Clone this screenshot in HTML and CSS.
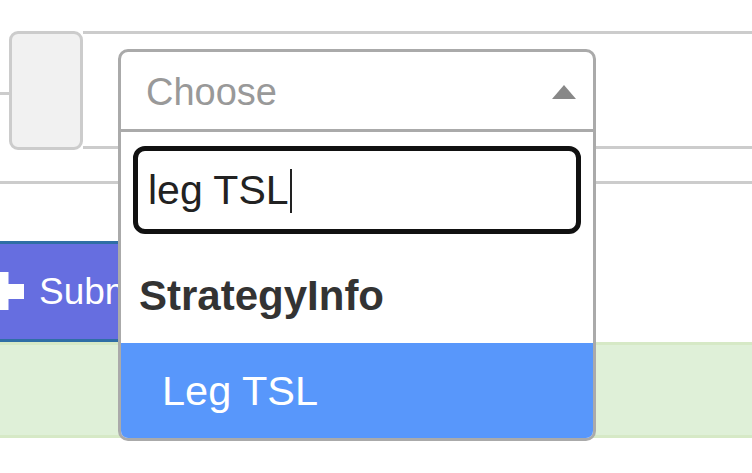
FILE: index.html
```html
<!DOCTYPE html>
<html lang="en">
<head>
<meta charset="utf-8">
<title>Select</title>
<link rel="stylesheet" href="styles.css">
</head>
<body>
<div class="page">
  <div class="group">
    <div class="stub"></div>
    <div class="addon"></div>
    <div class="field"></div>
  </div>
  <div class="rule"></div>
  <div class="actions">
    <button class="btn" type="button">
      <svg class="plus" width="46" height="38" viewBox="0 0 46 38" aria-hidden="true">
        <rect x="15.5" y="0" width="15" height="38" fill="#fff"/>
        <rect x="0" y="12" width="46" height="15" fill="#fff"/>
      </svg>
      <span class="btn-label">Submit</span>
    </button>
  </div>
  <div class="row-success"></div>

  <div class="select2">
    <div class="selection">
      <span class="placeholder">Choose</span>
      <span class="arrow"></span>
    </div>
    <div class="search-wrap">
      <div class="search">leg TSL<span class="caret"></span></div>
    </div>
    <ul class="results">
      <li class="group-label">StrategyInfo</li>
      <li class="option highlighted">Leg TSL</li>
    </ul>
  </div>
</div>
</body>
</html>
```

FILE: styles.css
```css
* { box-sizing: border-box; }
html, body {
  margin: 0;
  padding: 0;
  background: #fff;
  width: 752px;
  height: 473px;
  overflow: hidden;
  font-family: "Liberation Sans", Arial, sans-serif;
}
.page {
  position: relative;
  width: 752px;
  height: 473px;
  padding-top: 31px;
}
.group {
  display: flex;
  align-items: stretch;
  height: 119px;
}
.stub {
  width: 10px;
  align-self: center;
  height: 3px;
  background: #cccccc;
  margin-top: 6px;
}
.addon {
  width: 74px;
  margin-left: -1px;
  border: 3px solid #cccccc;
  border-radius: 9px;
  background: #f1f1f1;
}
.field {
  flex: 1;
  border-top: 3px solid #cccccc;
  border-bottom: 3px solid #cccccc;
  margin-bottom: 1px;
}
.rule {
  margin-top: 31px;
  height: 3px;
  background: #cccccc;
}
.actions {
  margin-top: 57px;
  height: 101px;
  width: 118px;
  overflow: hidden;
}
.btn {
  display: flex;
  align-items: center;
  height: 101px;
  width: 118px;
  padding: 0;
  margin: 0;
  border: none;
  border-top: 3px solid #2f6ea5;
  border-bottom: 3px solid #2f6ea5;
  background: #666ee0;
  color: #fff;
  font-family: "Liberation Sans", Arial, sans-serif;
  font-size: 37px;
  line-height: 1;
  overflow: hidden;
  white-space: nowrap;
}
.plus {
  margin-left: -22px;
  margin-right: 15px;
  margin-top: -2px;
  flex: none;
}
.btn-label {
  flex: none;
}
.row-success {
  height: 96px;
  background: #dff0d8;
  border-top: 3px solid #d6e9c6;
  border-bottom: 3px solid #d6e9c6;
}

/* select2 dropdown overlay */
.select2 {
  position: absolute;
  left: 118px;
  top: 49px;
  width: 478px;
  border: 3px solid #aaaaaa;
  border-radius: 10px;
  background: #fff;
  overflow: hidden;
}
.selection {
  display: flex;
  align-items: center;
  justify-content: space-between;
  height: 80px;
  border-bottom: 3px solid #aaaaaa;
  padding: 4px 17px 0 25px;
}
.placeholder {
  color: #999999;
  font-size: 38px;
  line-height: 73px;
}
.arrow {
  width: 0;
  height: 0;
  border-left: 12px solid transparent;
  border-right: 12px solid transparent;
  border-bottom: 14px solid #888888;
  margin-top: -2px;
}
.search-wrap {
  padding: 14px 12px;
}
.search {
  height: 88px;
  border: 5px solid #111111;
  border-radius: 12px;
  padding-left: 10px;
  font-size: 41px;
  line-height: 78px;
  color: #222222;
  display: flex;
  align-items: center;
  white-space: pre;
}
.caret {
  display: inline-block;
  width: 2px;
  height: 44px;
  background: #222;
  margin-left: 1px;
  margin-top: 2px;
}
.results {
  list-style: none;
  margin: 0;
  padding: 0;
}
.group-label {
  height: 95px;
  line-height: 95px;
  padding-left: 18px;
  font-size: 42px;
  font-weight: bold;
  color: #333333;
}
.option {
  height: 95px;
  line-height: 95px;
  padding-left: 41px;
  font-size: 41.5px;
  color: #fff;
}
.highlighted {
  background: #5897fb;
}
```
